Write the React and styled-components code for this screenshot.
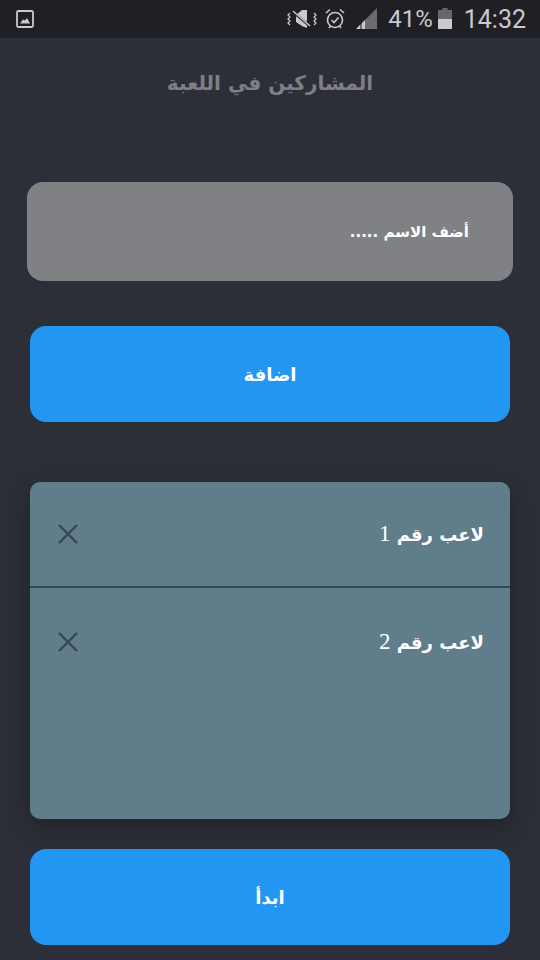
import React from 'react';
import styled, { createGlobalStyle } from 'styled-components';

const players = ['لاعب رقم 1', 'لاعب رقم 2'];

const GlobalStyle = createGlobalStyle`
  html, body {
    margin: 0;
    padding: 0;
    background: #2d2f38;
  }
  * {
    box-sizing: border-box;
  }
`;

const Screen = styled.div`
  width: 540px;
  height: 960px;
  overflow: hidden;
  display: flex;
  flex-direction: column;
  align-items: center;
  background: #2d2f38;
  font-family: 'DejaVu Sans', sans-serif;
`;

const StatusBar = styled.div`
  width: 100%;
  height: 38px;
  flex: none;
  display: flex;
  align-items: center;
  justify-content: space-between;
  padding: 0 14px 0 16px;
  background: #1f1f25;
  color: #c9c9ce;
  font-family: 'Roboto', sans-serif;
`;

const StatusGroup = styled.div`
  display: flex;
  align-items: center;
`;

const Percent = styled.span`
  font-size: 24px;
  margin-left: 10px;
`;

const Clock = styled.span`
  font-size: 25px;
  margin-left: 12px;
`;

const Title = styled.h1`
  margin: 33px 0 87px;
  height: 24px;
  line-height: 24px;
  font-size: 20px;
  font-weight: 700;
  color: #7d7f85;
  text-align: center;
`;

const NameInput = styled.div`
  width: 486px;
  height: 99px;
  flex: none;
  display: flex;
  align-items: center;
  padding: 0 44px;
  border-radius: 16px;
  background: #808185;
  color: #fff;
  font-size: 15px;
  font-weight: 700;
`;

const ActionButton = styled.button`
  width: 480px;
  height: 96px;
  flex: none;
  margin-top: ${(props) => props.$top}px;
  border: 0;
  border-radius: 16px;
  background: #2196f3;
  color: #fff;
  font-family: inherit;
  font-size: 18px;
  font-weight: 700;
`;

const PlayerList = styled.div`
  width: 480px;
  height: 337px;
  flex: none;
  margin-top: 60px;
  border-radius: 10px;
  background: #607d8b;
  box-shadow: 0 8px 24px rgba(0, 0, 0, 0.3);
`;

const PlayerRow = styled.div`
  height: ${(props) => props.$height}px;
  display: flex;
  align-items: center;
  justify-content: space-between;
  padding: ${(props) => props.$pad};
  border-bottom: ${(props) => (props.$divider ? '2px solid #36474f' : '0')};
`;

const PlayerName = styled.span`
  color: #fff;
  font-family: 'DejaVu Sans', 'Liberation Serif', serif;
  font-size: 18px;
  font-weight: 700;
`;

const PlayerNumber = styled.span`
  font-family: 'Liberation Serif', serif;
  font-size: 23px;
  font-weight: 400;
`;

const RemoveIcon = styled.svg`
  width: 24px;
  height: 24px;
  flex: none;
  stroke: #37474f;
  stroke-width: 2.4;
  fill: none;
`;

const ImageIcon = () => (
  <svg width="18" height="20" viewBox="0 0 18 20">
    <rect x="1" y="2" width="16" height="16" rx="1.5" fill="none" stroke="#c9c9ce" strokeWidth="1.8" />
    <path d="M4 14.5 L7 10.5 L9 11.5 L11 9 L14 14.5 Z" fill="#c9c9ce" />
  </svg>
);

const MuteIcon = () => (
  <svg width="30" height="24" viewBox="0 0 30 24">
    <path d="M9 8 L15 3 L20 3 L20 21 L15 19 L9 15 Z" fill="#c9c9ce" />
    <path d="M6 5 L24 20" stroke="#1f1f25" strokeWidth="2.5" />
    <path d="M6 4 L23 19" stroke="#c9c9ce" strokeWidth="1.5" />
    <path d="M3 6 L1 8 L3 10 L1 12 L3 14 L1 16 L3 18 M27 6 L29 8 L27 10 L29 12 L27 14 L29 16 L27 18" fill="none" stroke="#c9c9ce" strokeWidth="1.2" />
  </svg>
);

const AlarmIcon = () => (
  <svg width="20" height="22" viewBox="0 0 20 22" style={{ marginLeft: 8 }}>
    <circle cx="10" cy="12" r="7.5" fill="none" stroke="#c9c9ce" strokeWidth="1.6" />
    <path d="M6.5 12 L9 14.5 L13.5 9.5" fill="none" stroke="#c9c9ce" strokeWidth="1.6" />
    <path d="M1 5 L5 1.5 M19 5 L15 1.5 M4 20 L5.5 18 M16 20 L14.5 18" stroke="#c9c9ce" strokeWidth="1.6" />
  </svg>
);

const SignalIcon = () => (
  <svg width="22" height="22" viewBox="0 0 22 22" style={{ marginLeft: 11 }}>
    <path d="M0 21 L21 0 L21 21 Z" fill="#6b6c71" />
    <path d="M0 21 L4 17 L4 21 Z M6 21 L6 15 L9 12 L9 21 Z" fill="#c9c9ce" />
  </svg>
);

const BatteryIcon = () => (
  <svg width="14" height="22" viewBox="0 0 14 22" style={{ marginLeft: 5 }}>
    <path d="M4.5 0 H9.5 V2 H14 V21 H0 V2 H4.5 Z" fill="#67686d" />
    <rect y="11" width="14" height="10" fill="#c9c9ce" />
  </svg>
);

const App = () => (
  <Screen>
    <GlobalStyle />
    <StatusBar>
      <ImageIcon />
      <StatusGroup>
        <MuteIcon />
        <AlarmIcon />
        <SignalIcon />
        <Percent>41%</Percent>
        <BatteryIcon />
        <Clock>14:32</Clock>
      </StatusGroup>
    </StatusBar>
    <Title dir="rtl">المشاركين في اللعبة</Title>
    <NameInput dir="rtl">أضف الاسم .....</NameInput>
    <ActionButton $top={45}>اضافة</ActionButton>
    <PlayerList>
      {players.map((name, index) => {
        const [label, number] = [name.slice(0, -2), name.slice(-1)];
        return (
          <PlayerRow
            key={name}
            dir="rtl"
            $divider={index === 0}
            $height={index === 0 ? 106 : 108}
            $pad={index === 0 ? '0 26px 0 26px' : '0 26px 0 26px'}
          >
            <PlayerName>
              {label} <PlayerNumber>{number}</PlayerNumber>
            </PlayerName>
            <RemoveIcon viewBox="0 0 24 24">
              <path d="M3 3 L21 21 M21 3 L3 21" />
            </RemoveIcon>
          </PlayerRow>
        );
      })}
    </PlayerList>
    <ActionButton $top={30}>ابدأ</ActionButton>
  </Screen>
);

export default App;
